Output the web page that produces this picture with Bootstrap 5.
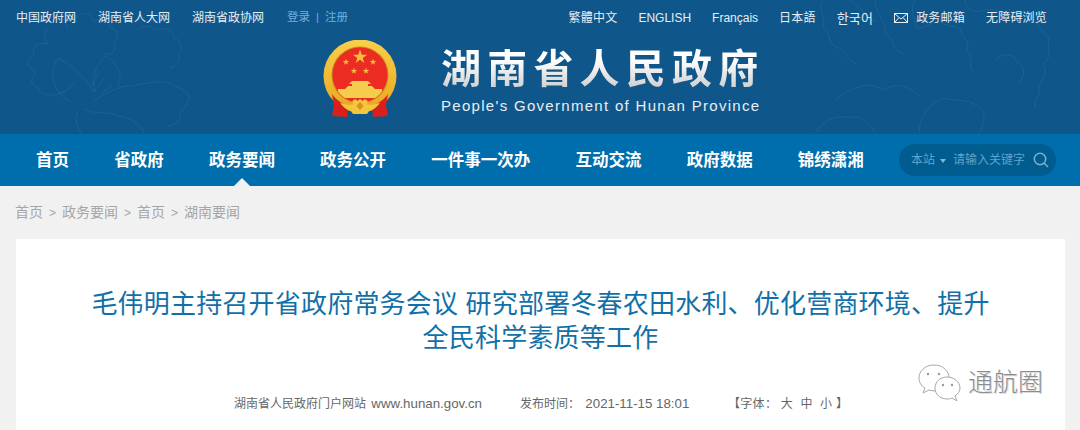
<!DOCTYPE html>
<html lang="zh-CN">
<head>
    <meta charset="UTF-8">
    <title>湖南省人民政府</title>
    <link rel="stylesheet" href="https://cdn.jsdelivr.net/npm/bootstrap@5.3.0/dist/css/bootstrap.min.css">
    <style>
        body {
            background: #f1f1f1;
            font-family: "Liberation Sans", "Noto Sans CJK SC", sans-serif;
            overflow: hidden;
        }
        a { text-decoration: none; }

        /* header */
        .site-head {
            background: #0f578b;
            height: 134px;
            position: relative;
            overflow: hidden;
        }
        .peony { position: absolute; top: 0; fill: none; stroke: #fff; stroke-opacity: .06; stroke-width: 1; }
        .peony-l { left: 8px; width: 190px; height: 134px; }
        .peony-r { left: 815px; width: 250px; height: 134px; }
        .top-bar { height: 35px; padding: 1px 33px 0 16px; font-size: 12px; position: relative; }
        .top-bar a { color: #e6eef4; }
        .top-left { gap: 22px; }
        .top-right { gap: 21px; letter-spacing: .2px; }
        .top-en { letter-spacing: 0; }
        .top-kr { font-family: "Noto Sans CJK KR", sans-serif; font-size: 13px; }
        .top-login { color: #6fb0e0; font-size: 11.5px; margin-left: 1px; }
        .top-login a { color: #6fb0e0; }
        .top-login i { font-style: normal; margin: 0 6px; }
        .mail-ico { width: 14px; height: 10px; margin-right: 8px; vertical-align: -0.5px; }
        .brand-row { padding: 5px 0 0 323px; gap: 44px; position: relative; }
        .emblem { width: 74px; height: 78px; flex: none; }
        .brand-cn {
            font-size: 40px;
            line-height: 46px;
            font-weight: 700;
            letter-spacing: 6.2px;
            margin-top: 6px;
            background: linear-gradient(#fff 30%, #c9c9c9);
            -webkit-background-clip: text;
            background-clip: text;
            color: transparent;
        }
        .brand-en { font-size: 15px; line-height: 18px; letter-spacing: 1.3px; color: #e8eef3; margin-top: 5px; }

        /* main nav */
        .main-nav { background: #006eac; height: 52px; padding: 0 24px 0 36px; }
        .main-nav .nav { gap: 45.2px; }
        .main-nav .nav-link {
            color: #fff;
            padding: 0;
            font-size: 16.5px;
            font-weight: 700;
            line-height: 52px;
            position: relative;
        }
        .main-nav .nav-link.active::after {
            content: "";
            position: absolute;
            left: 50%;
            bottom: 0;
            margin-left: -8px;
            border: 8px solid transparent;
            border-top: 0;
            border-bottom-color: #f1f1f1;
        }
        .search-pill {
            width: 157px;
            height: 32px;
            border-radius: 16px;
            background: #005b8e;
            color: #5fa4cd;
            font-size: 12px;
            padding: 0 7px 0 12px;
        }
        .search-arrow { border: 3px solid transparent; border-top: 4px solid #7fb6d6; border-bottom: 0; margin: 1px 7px 0 5px; }
        .search-ico { width: 16px; height: 16px; margin-left: auto; }

        /* crumb + article */
        .crumbs { height: 53px; padding-left: 15px; font-size: 14px; color: #a6a6a6; }
        .crumbs a { color: #a6a6a6; }
        .crumbs i { font-style: normal; font-size: 12px; margin: 0 6px; }
        .article-box { background: #fff; margin: 0 15px 0 16px; padding-top: 48px; height: 191px; position: relative; }
        .article-title {
            color: #1270a8;
            font-size: 26px;
            line-height: 34px;
            letter-spacing: .2px;
            font-weight: 400;
            text-align: center;
            margin: 0 auto;
            width: 905px;
        }
        .article-meta { color: #666; font-size: 12px; margin-top: 39px; padding-left: 218px; height: 20px; }
        .article-meta .meta-num { font-size: 13.3px; margin-left: 2px; }
        .meta-from { width: 286px; }
        .meta-time { width: 208px; }
        .meta-size { letter-spacing: .3px; }
        .wx-mark {
            position: absolute;
            left: 901px;
            top: 124px;
            gap: 7px;
            font-size: 25px;
            line-height: 36px;
            color: #8d8d8d;
            text-shadow: 1px 1px 0 #ddd;
            font-weight: 300;
        }
        .wx-ico { width: 44px; height: 38px; }
    </style>
</head>
<body>
    <header class="site-head">
        <svg class="peony peony-l" viewBox="0 0 190 134">
            <path d="M40 30c-6 4-4 10 0 14-8-2-16 0-14 8 1 4-8 6-6 12 1 5 8 5 8 10-6 4-6 12 2 13 2 8 8 8 14 8 8 0 16-4 24-14"/>
            <path d="M60 28c-6-8 0-14 8-10 6-8 16-4 18 4 6-6 16-4 16 6 8 0 10 10 4 14 4 8-2 14-10 12"/>
            <path d="M130 30c4-6 14-4 18 0 8-4 18 0 18 8 8 2 10 12 4 16 4 8-2 12-8 14"/>
            <path d="M62 102c-14-10-24-24-12-44 10 6 24 14 36 34M88 92c-6-12 0-28 10-36 10 6 18 18 12 30"/>
            <path d="M86 100c12-6 24-14 34-14 14 0 28-8 44-2 8 6 16 6 18 14-4 6-4 12-10 14 2 8-6 14-12 14"/>
            <path d="M76 108c10 8 24 2 34 8 12 2 24 8 26 18M70 112c-4 6-2 14 4 22M86 92l10-14M92 94l12-8M84 86l6-12"/>
        </svg>
        <svg class="peony peony-r" viewBox="0 0 250 134">
            <path d="M8 0c-6 10 4 18 0 28 8 4 4 14 12 18 10 4 12 14 22 18M34 0c12 6 16 18 28 22"/>
            <path d="M60 0c0 14 12 20 10 34 10 2 6 18 20 20M100 0c-6 10 0 20 2 28 10 0 16-8 24-6 6 6 14 2 20 8 0 8 10 10 6 20 8 6 0 16 6 22"/>
            <path d="M150 0c0 10 10 14 20 10 8-2 16 4 24 0 8 4 20 0 22 10 10 2 10 14 18 18-2 10 4 18-6 26 6 8-2 16-4 24 2 8-6 14-4 20"/>
            <path d="M20 100c14-12 34-20 48-10 12-8 28-4 36 6M104 134c0-14 8-30 24-36 14 4 24 0 34 8 10 4 8 18 2 28"/>
            <path d="M0 134c8-14 22-20 34-16 10-4 22 4 26 16M180 60c8-8 20-6 24 4 8 4 4 14 0 20"/>
        </svg>
        <div class="top-bar d-flex justify-content-between align-items-center">
            <div class="top-left d-flex align-items-center">
                <a href="#">中国政府网</a>
                <a href="#">湖南省人大网</a>
                <a href="#">湖南省政协网</a>
                <span class="top-login"><a href="#">登录</a><i>|</i><a href="#">注册</a></span>
            </div>
            <div class="top-right d-flex align-items-center">
                <a href="#">繁體中文</a>
                <a class="top-en" href="#">ENGLISH</a>
                <a class="top-en" href="#">Français</a>
                <a href="#">日本語</a>
                <a class="top-kr" href="#">한국어</a>
                <a href="#"><svg class="mail-ico" viewBox="0 0 14 10" fill="none" stroke="#e6eef4"><rect x=".5" y=".5" width="13" height="9"/><path d="M1 1l6 5 6-5M1 9l4-4.500M13 9L9 4.500"/></svg>政务邮箱</a>
                <a href="#">无障碍浏览</a>
            </div>
        </div>
        <div class="brand-row d-flex">
            <svg class="emblem" viewBox="0 0 74 78">
                <defs>
                    <linearGradient id="ringGold" x1="0" y1="0" x2="0" y2="1">
                        <stop offset="0" stop-color="#f9cf4a"/>
                        <stop offset="1" stop-color="#e9a51f"/>
                    </linearGradient>
                    <clipPath id="redClip"><circle cx="37" cy="35" r="27.500"/></clipPath>
                    <polygon id="star5" points="0,-1 .235,-.309 .951,-.309 .363,.118 .588,.809 0,.382 -.588,.809 -.363,.118 -.951,-.309 -.235,-.309" fill="#f2bf3a"/>
                </defs>
                <circle cx="37" cy="36" r="36.500" fill="url(#ringGold)"/>
                <circle cx="37" cy="35" r="28.500" fill="#c98a1c"/>
                <circle cx="37" cy="35" r="27.500" fill="#ec2c23"/>
                <use href="#star5" transform="translate(37 17) scale(7.500)"/>
                <use href="#star5" transform="translate(23 22) scale(3.500)"/>
                <use href="#star5" transform="translate(50 22) scale(3.500)"/>
                <use href="#star5" transform="translate(31 31) scale(3.500)"/>
                <use href="#star5" transform="translate(43 31) scale(3.500)"/>
                <g clip-path="url(#redClip)" fill="#f5cd4d">
                    <path d="M29 41h16l3 3h-3v2h4l3 3H22l3-3h4v-2h-3z"/>
                    <rect x="15" y="49" width="44" height="9"/>
                </g>
                <path d="M9 54c3 5 9 9 16 12l-1 11-15-1 2-11z" fill="#d9201c"/>
                <path d="M65 54c-3 5-9 9-16 12l1 11 15-1-2-11z" fill="#d9201c"/>
                <g fill="#f4c63e">
                    <path d="M17 63c6 1 10 3 14 1l6-5 6 5c4 2 8 0 14-1-3 4-7 7-11 8l-2 3H30l-2-3c-4-1-8-4-11-8z"/>
                    <circle cx="32" cy="62" r="2.500"/><circle cx="42" cy="62" r="2.500"/>
                </g>
                <path d="M37 62l3.500 4-3.500 4-3.500-4z" fill="#d9901f"/>
            </svg>
            <div>
                <div class="brand-cn">湖南省人民政府</div>
                <div class="brand-en">People's Government of Hunan Province</div>
            </div>
        </div>
    </header>

    <nav class="main-nav d-flex justify-content-between align-items-center">
        <ul class="nav flex-nowrap">
            <li class="nav-item"><a class="nav-link" href="#">首页</a></li>
            <li class="nav-item"><a class="nav-link" href="#">省政府</a></li>
            <li class="nav-item"><a class="nav-link active" href="#">政务要闻</a></li>
            <li class="nav-item"><a class="nav-link" href="#">政务公开</a></li>
            <li class="nav-item"><a class="nav-link" href="#">一件事一次办</a></li>
            <li class="nav-item"><a class="nav-link" href="#">互动交流</a></li>
            <li class="nav-item"><a class="nav-link" href="#">政府数据</a></li>
            <li class="nav-item"><a class="nav-link" href="#">锦绣潇湘</a></li>
        </ul>
        <div class="search-pill d-flex align-items-center">
            <span>本站</span><span class="search-arrow"></span><span>请输入关键字</span>
            <svg class="search-ico" viewBox="0 0 16 16" fill="none" stroke="#7fb0cd" stroke-width="1.500"><circle cx="7" cy="7" r="5.700"/><path d="M11 11l4 4"/></svg>
        </div>
    </nav>

    <div class="crumbs d-flex align-items-center">
        <a href="#">首页</a><i>&gt;</i><a href="#">政务要闻</a><i>&gt;</i><a href="#">首页</a><i>&gt;</i><a href="#">湖南要闻</a>
    </div>

    <main class="article-box">
        <h1 class="article-title">毛伟明主持召开省政府常务会议 研究部署冬春农田水利、优化营商环境、提升全民科学素质等工作</h1>
        <div class="article-meta d-flex align-items-center">
            <span class="meta-from">湖南省人民政府门户网站 <span class="meta-num">www.hunan.gov.cn</span></span>
            <span class="meta-time">发布时间： <span class="meta-num">2021-11-15 18:01</span></span>
            <span class="meta-size">【字体： 大&nbsp;&nbsp;中&nbsp;&nbsp;小 】</span>
        </div>
        <div class="wx-mark d-flex align-items-center">
            <svg class="wx-ico" viewBox="0 0 44 38" fill="#fff" stroke="#a8a8a8" stroke-width="1">
                <path d="M17 2C8 2 2 8 2 15c0 4 2 8 6 10l-2 5 6-3c2 .5 4 1 6 1 8 0 14-6 14-13S26 2 17 2z"/>
                <path d="M30 14c-7 0-12 5-12 11s5 11 12 11c2 0 3 0 5-1l5 3-2-5c3-2 5-5 5-8 0-6-6-11-13-11z"/>
                <circle cx="11" cy="11" r="1.200" fill="#999" stroke="none"/><circle cx="22" cy="11" r="1.200" fill="#999" stroke="none"/>
                <circle cx="26" cy="22" r="1.200" fill="#999" stroke="none"/><circle cx="35" cy="22" r="1.200" fill="#999" stroke="none"/>
            </svg>
            <span>通航圈</span>
        </div>
    </main>
    <script src="https://cdn.jsdelivr.net/npm/bootstrap@5.3.0/dist/js/bootstrap.bundle.min.js"></script>
</body>
</html>
